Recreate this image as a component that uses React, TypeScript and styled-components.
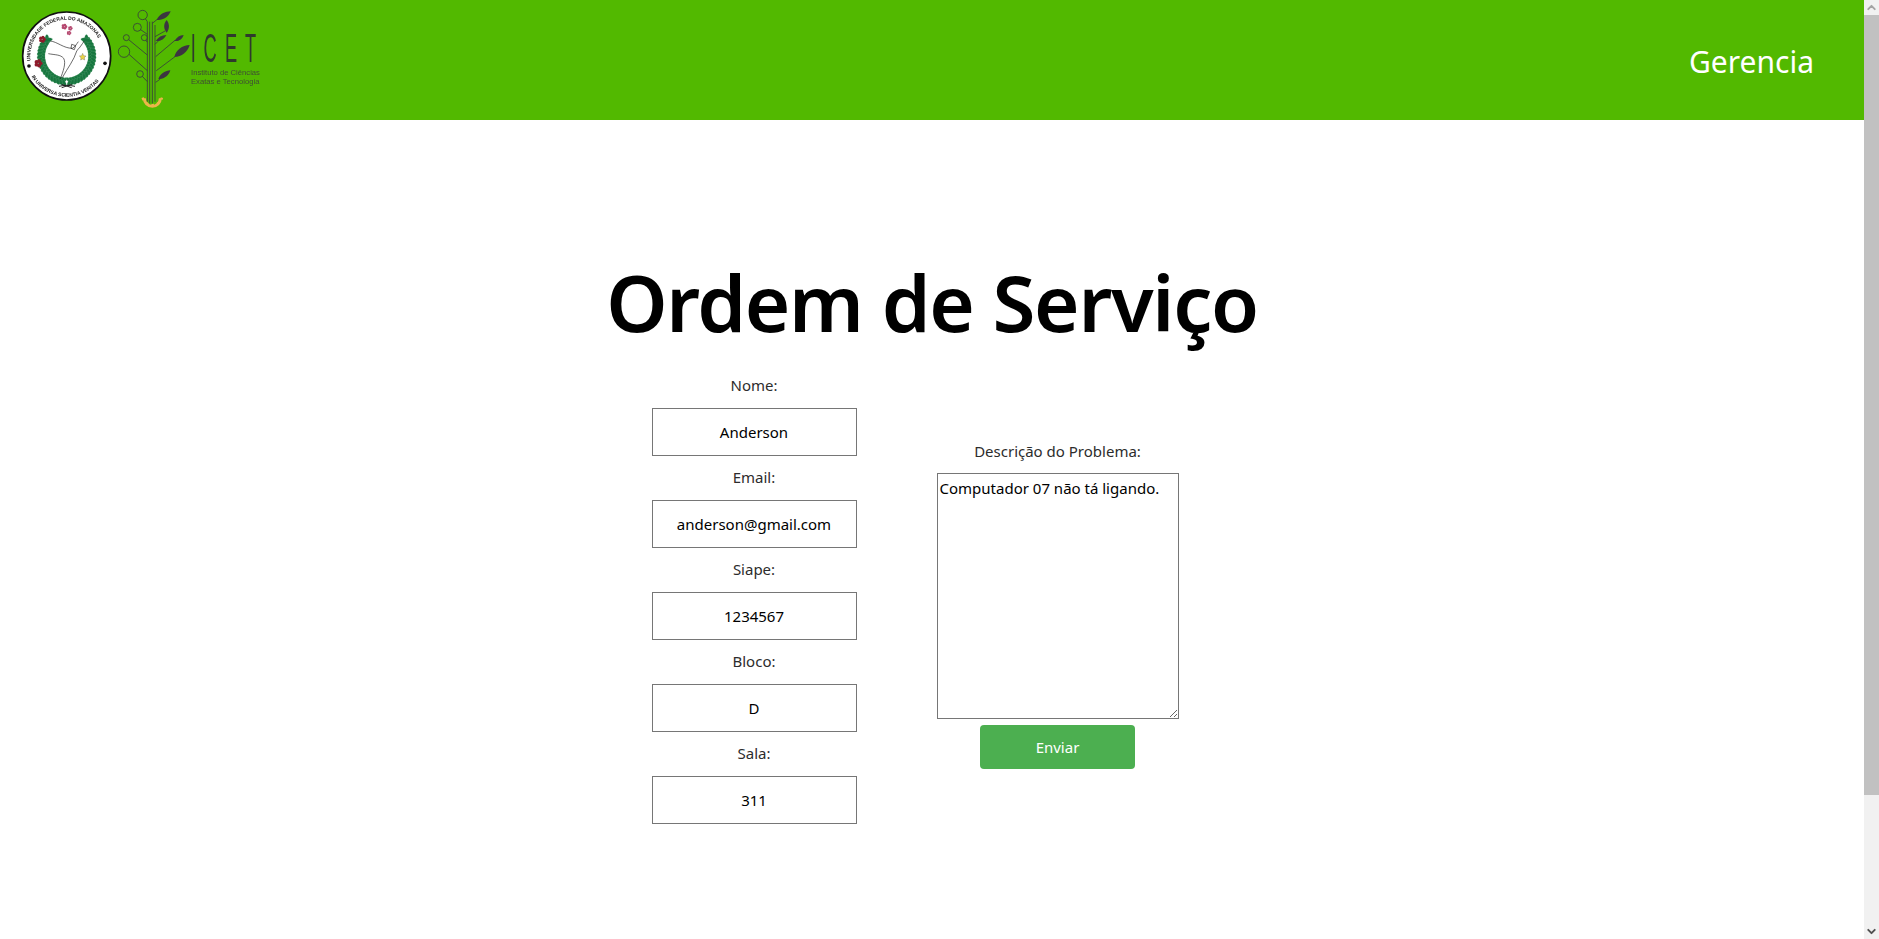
import * as React from "react";
import styled, { createGlobalStyle } from "styled-components";
import { ChevronDown, ChevronUp } from "lucide-react";

const GlobalStyle = createGlobalStyle`
    html, body {
        height: 100%;
        overflow: hidden;
    }
    body {
        margin: 0;
        background: white;
        font-family: "Noto Sans", "Open Sans", sans-serif;
    }
`;

const Window = styled.div`
    display: flex;
    height: 100vh;
    overflow: hidden;
`;

const Page = styled.div`
    flex: 1;
    min-width: 0;
`;

const ScrollBar = styled.div`
    width: 15px;
    flex: none;
    display: flex;
    flex-direction: column;
    background: #f1f1f1;
`;

const ScrollArrow = styled.div<{ $color: string }>`
    height: 15px;
    display: flex;
    align-items: center;
    justify-content: center;
    color: ${p => p.$color};
`;

const ScrollThumb = styled.div`
    height: 780px;
    background: #c1c1c1;
`;

const ScrollTrack = styled.div`
    flex: 1;
`;

const Header = styled.header`
    height: 120px;
    background-color: #52b900;
    display: flex;
    justify-content: space-between;
    padding: 5px 50px 0 15px;
    box-sizing: border-box;
`;

const Logos = styled.div`
    display: flex;
    align-items: flex-start;
    filter: blur(0.35px);
`;

const NavLink = styled.a`
    color: white;
    font-size: 30px;
    line-height: 114px;
`;

const Title = styled.h1`
    margin: 127px 0 0;
    text-align: center;
    font-size: 78px;
    line-height: 110px;
    font-weight: 600;
    letter-spacing: -1.3px;
    color: black;
`;

const Form = styled.form`
    display: flex;
    justify-content: center;
    align-items: center;
    gap: 80px;
    padding-right: 34px;
    margin-top: 18px;
`;

const Column = styled.div`
    display: flex;
    flex-direction: column;
    align-items: center;
`;

const ProblemColumn = styled(Column)`
    margin-bottom: 2px;
`;

const Label = styled.label`
    font-size: 15px;
    line-height: 20px;
    color: #2c2c2c;
    margin-bottom: 13px;
`;

const ProblemLabel = styled(Label)`
    margin-bottom: 12px;
    padding-top: 1px;
`;

const Input = styled.input`
    box-sizing: border-box;
    width: 205px;
    height: 48px;
    margin-bottom: 11px;
    padding: 0;
    border: 1px solid #767676;
    background: white;
    color: black;
    font: inherit;
    font-size: 15px;
    text-align: center;
    outline: none;
`;

const Description = styled.textarea`
    box-sizing: border-box;
    width: 242px;
    height: 246px;
    padding: 4px 2px 2px;
    border: 1px solid #767676;
    color: black;
    font: inherit;
    font-size: 15px;
    outline: none;
`;

const SubmitButton = styled.button`
    width: 155px;
    height: 44px;
    margin-top: 6px;
    border: none;
    border-radius: 4px;
    background-color: #4caf50;
    color: white;
    font: inherit;
    font-size: 15px;
`;

const fields = [
    { label: "Nome:", value: "Anderson" },
    { label: "Email:", value: "anderson@gmail.com" },
    { label: "Siape:", value: "1234567" },
    { label: "Bloco:", value: "D" },
    { label: "Sala:", value: "311" }
];

// leaf positions of the laurel, as angle round the seal centre
const laurelAngles = [
    100, 107, 114, 121, 128, 135, 142, 149, 156, 163, 170, 177, 184, 191, 198, 205, 212, 219
];

const Laurel: React.FunctionComponent = () => (
    <g fill="#17763f" stroke="#7fb892" strokeWidth="0.6">
        {laurelAngles.map(a => {
            const rad = (a * Math.PI) / 180;
            const x = 155 + 76 * Math.cos(rad);
            const y = 153 + 76 * Math.sin(rad);
            const x2 = 155 - 76 * Math.cos(rad);
            return (
                <g key={a}>
                    <ellipse cx={x} cy={y} rx="17" ry="6" transform={`rotate(${a + 50} ${x} ${y})`} />
                    <ellipse cx={x} cy={y} rx="17" ry="6" transform={`rotate(${a + 130} ${x} ${y})`} />
                    <ellipse cx={x2} cy={y} rx="17" ry="6" transform={`rotate(${130 - a} ${x2} ${y})`} />
                    <ellipse cx={x2} cy={y} rx="17" ry="6" transform={`rotate(${50 - a} ${x2} ${y})`} />
                </g>
            );
        })}
    </g>
);

const Flower: React.FunctionComponent<{ x: number; y: number; color: string; size?: number }> = ({
    x,
    y,
    color,
    size = 5
}) => (
    <g fill={color}>
        {[0, 72, 144, 216, 288].map(a => (
            <circle
                key={a}
                cx={x + size * Math.cos((a * Math.PI) / 180)}
                cy={y + size * Math.sin((a * Math.PI) / 180)}
                r={size * 0.8}
            />
        ))}
    </g>
);

const Seal: React.FunctionComponent = () => (
    <svg width="100" height="100" viewBox="0 0 300 300">
        <defs>
            <path id="sealTop" d="M 47 168 A 109 109 0 1 1 263 168" />
            <path id="sealBottom" d="M 44.4 204.6 A 122 122 0 0 0 265.6 204.6" />
        </defs>
        <circle cx="155" cy="153" r="132" fill="white" stroke="#111" strokeWidth="5" />
        <text fontFamily="Liberation Sans" fontWeight="700" fontSize="14.8" fill="#1a1a1a">
            <textPath href="#sealTop">UNIVERSIDADE FEDERAL DO AMAZONAS</textPath>
        </text>
        <text fontFamily="Liberation Sans" fontWeight="700" fontSize="15" fill="#1a1a1a">
            <textPath href="#sealBottom" startOffset="4%">
                IN UNIVERSA SCIENTIA VERITAS
            </textPath>
        </text>
        <circle cx="42" cy="183" r="5.5" fill="#111" />
        <circle cx="270" cy="175" r="5.5" fill="#111" />
        <Laurel />
        <Flower x={82} y={103} color="#8e1a2b" size={6} />
        <Flower x={70} y={175} color="#8e1a2b" size={7} />
        <Flower x={148} y={65} color="#b5476f" />
        <Flower x={166} y={70} color="#b5476f" size={4} />
        <Flower x={162} y={84} color="#b5476f" size={4} />
        <path
            d="M203 145l3 7 7 1-5 5 1 7-6-3-6 3 1-7-5-5 7-1z"
            fill="#e9d44a"
            stroke="#555"
            strokeWidth="1"
        />
        <g fill="none" stroke="#222" strokeWidth="2">
            <path d="M106 108c20 2 40 22 66 22 8-4 12-12 18-20" />
            <path d="M100 146c20 4 36 2 46 14 8 14-2 40-10 62" />
            <path d="M142 218c16-30 34-50 44-82 8-6 14-18 22-28" />
            <path d="M170 118l12 4-4 12-10-4z" />
            <path d="M132 244c16-4 30-4 48 0M140 238l30 10M170 238l-30 10" strokeWidth="3" />
        </g>
    </svg>
);

const branches = [
    "M97 50 91 41",
    "M97 88 77 74",
    "M97 112 92 105",
    "M97 150 41 104",
    "M97 197 42 148",
    "M97 230 82 214",
    "M112 55 128 42",
    "M120 95 150 78",
    "M120 118 132 106",
    "M122 155 180 106",
    "M124 197 180 155",
    "M122 232 136 222"
];

const leaves = [
    "M125 45c8-18 26-26 42-26-6 16-22 28-42 26z",
    "M155 45c-10 12-10 26 0 38 9-12 9-26 0-38z",
    "M122 108c8-12 18-18 32-18-6 12-18 20-32 18z",
    "M178 108c8-12 16-18 28-18-4 12-14 20-28 18z",
    "M178 156c4-20 24-36 46-36-6 20-24 36-46 36z",
    "M130 222c4-14 22-26 36-26-4 14-18 28-36 26z"
];

const TreeLogo: React.FunctionComponent = () => (
    <svg width="150" height="110" viewBox="0 0 450 330">
        <g fill="none" stroke="#ecb54a">
            <path d="M88 280A24 24 0 0 0 136 280" strokeWidth="9" />
            <path d="M83 278A30 30 0 0 0 141 278" strokeWidth="7" strokeDasharray="8 10" />
        </g>
        <g fill="none" stroke="#38423a" strokeWidth="2.6">
            <path d="M97 50V290M104 50V295M112 50V295M120 60V290" />
            {branches.map(d => (
                <path key={d} d={d} />
            ))}
            <circle cx="83" cy="30" r="14" />
            <circle cx="67" cy="67" r="12" />
            <circle cx="34" cy="98" r="9" />
            <circle cx="88" cy="98" r="9" />
            <circle cx="27" cy="140" r="17" />
            <circle cx="75" cy="207" r="10" />
        </g>
        <g fill="#3c3540">
            {leaves.map(d => (
                <path key={d} d={d} />
            ))}
        </g>
        <text
            y="172"
            fontFamily="Liberation Sans"
            fontSize="122"
            fill="#2f3a2c"
            transform="scale(0.45 1)"
            x="505 590 733 867"
        >
            ICET
        </text>
        <g fontFamily="Liberation Sans" fontSize="23" fill="#3f4d33">
            <text x="228" y="210">
                Instituto de Ciências
            </text>
            <text x="228" y="237">
                Exatas e Tecnologia
            </text>
        </g>
    </svg>
);

export default function App() {
    return (
        <Window>
            <GlobalStyle />
            <Page>
                <Header>
                    <Logos>
                        <Seal />
                        <TreeLogo />
                    </Logos>
                    <NavLink>Gerencia</NavLink>
                </Header>
                <Title>Ordem de Serviço</Title>
                <Form>
                    <Column>
                        {fields.map(f => (
                            <React.Fragment key={f.label}>
                                <Label>{f.label}</Label>
                                <Input defaultValue={f.value} />
                            </React.Fragment>
                        ))}
                    </Column>
                    <ProblemColumn>
                        <ProblemLabel>Descrição do Problema:</ProblemLabel>
                        <Description defaultValue="Computador 07 não tá ligando." />
                        <SubmitButton type="button">Enviar</SubmitButton>
                    </ProblemColumn>
                </Form>
            </Page>
            <ScrollBar>
                <ScrollArrow $color="#a3a3a3">
                    <ChevronUp size={13} strokeWidth={3.5} />
                </ScrollArrow>
                <ScrollThumb />
                <ScrollTrack />
                <ScrollArrow $color="#505050">
                    <ChevronDown size={13} strokeWidth={3.5} />
                </ScrollArrow>
            </ScrollBar>
        </Window>
    );
}
